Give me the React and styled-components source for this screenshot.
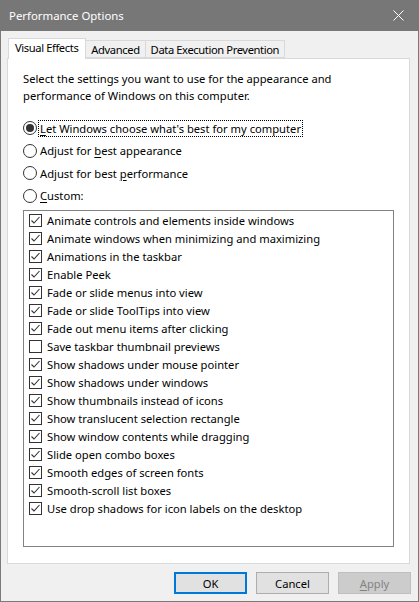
import React from "react";
import styled, { createGlobalStyle } from "styled-components";

const Global = createGlobalStyle`
  html, body { margin: 0; padding: 0; background: #f0f0f0; }
  body { font-family: "Segoe UI", "Noto Sans", "Liberation Sans", sans-serif; font-size: 11.2px; color: #000; }
  * { box-sizing: border-box; }
`;

const Window = styled.div`
  width: 419px;
  height: 602px;
  display: flex;
  flex-direction: column;
  background: #f0f0f0;
  border: 1px solid #7a7a7a;
  border-top: none;
`;

const TitleBar = styled.div`
  height: 31px;
  margin: 0 -1px;
  background: #777777;
  color: #fff;
  display: flex;
  align-items: center;
  justify-content: space-between;
  padding: 0 0 1px 9px;
  font-size: 11.4px;
`;

const CloseBtn = styled.div`
  width: 46px;
  height: 30px;
  display: flex;
  align-items: center;
  justify-content: center;
  padding-left: 5px;
`;

const Body = styled.div`
  flex: 1;
  display: flex;
  flex-direction: column;
  padding: 7px 8px 0 6px;
`;

const TabStrip = styled.div`
  display: flex;
  align-items: flex-end;
  height: 20px;
  padding-left: 1px;
  position: relative;
  z-index: 1;
`;

const Tab = styled.div`
  height: ${(p) => (p.$active ? "21px" : "18px")};
  margin-bottom: ${(p) => (p.$active ? "-1px" : "0")};
  margin-left: ${(p) => (p.$first ? "0" : "-1px")};
  padding: ${(p) => (p.$active ? "0 7px 3px 6px" : "0 5px 0 5px")};
  background: ${(p) => (p.$active ? "#fff" : "#f0f0f0")};
  border: 1px solid #d9d9d9;
  border-bottom: ${(p) => (p.$active ? "none" : "1px solid #d9d9d9")};
  display: flex;
  align-items: center;
  white-space: nowrap;
  letter-spacing: -0.4px;
  position: ${(p) => (p.$active ? "relative" : "static")};
  z-index: ${(p) => (p.$active ? 2 : 0)};
`;

const Panel = styled.div`
  height: 506px;
  background: #fff;
  border: 1px solid #d9d9d9;
  padding: 11px 15px 0 15px;
  display: flex;
  flex-direction: column;
`;

const Description = styled.p`
  margin: 0;
  line-height: 17px;
`;

const RadioGroup = styled.div`
  display: flex;
  flex-direction: column;
  gap: 5.6px;
  margin-top: 15.5px;
`;

const RadioRow = styled.div`
  display: flex;
  align-items: center;
  height: 17px;
`;

const RadioCircle = styled.span`
  width: 14px;
  height: 14px;
  border: 1px solid #333;
  border-radius: 50%;
  display: flex;
  align-items: center;
  justify-content: center;
  margin-right: 2px;
  flex-shrink: 0;
  &::after {
    content: "";
    display: ${(p) => (p.$checked ? "block" : "none")};
    width: 8px;
    height: 8px;
    border-radius: 50%;
    background: #333;
  }
`;

const Label = styled.span`
  white-space: nowrap;
  line-height: 15px;
  outline: ${(p) => (p.$focus ? "1px dotted #000" : "none")};
  outline-offset: 0;
  padding: 0 1px;
`;

const U = styled.span`
  text-decoration: underline;
  text-underline-offset: 2px;
`;

const ListBox = styled.div`
  margin-top: 5.5px;
  height: 337px;
  border: 1px solid #828282;
  padding: 1px 0 0 5px;
  display: flex;
  flex-direction: column;
`;

const CheckRow = styled.div`
  display: flex;
  align-items: center;
  height: 18px;
`;

const CheckBox = styled.span`
  width: 13px;
  height: 13px;
  border: 1px solid #333;
  display: flex;
  align-items: center;
  justify-content: center;
  margin-right: 5px;
  flex-shrink: 0;
  background: #fff;
`;

const ButtonRow = styled.div`
  display: flex;
  justify-content: flex-end;
  gap: 9px;
  padding: 8px 0 0 0;
  margin-right: -1px;
`;

const Button = styled.div`
  width: 73px;
  height: 22px;
  display: flex;
  align-items: center;
  justify-content: center;
  background: ${(p) => (p.$disabled ? "#cccccc" : "#e1e1e1")};
  border: ${(p) => (p.$default ? "2px solid #0078d7" : p.$disabled ? "1px solid #bfbfbf" : "1px solid #adadad")};
  color: ${(p) => (p.$disabled ? "#838383" : "#000")};
`;

const items = [
  ["Animate controls and elements inside windows", true],
  ["Animate windows when minimizing and maximizing", true],
  ["Animations in the taskbar", true],
  ["Enable Peek", true],
  ["Fade or slide menus into view", true],
  ["Fade or slide ToolTips into view", true],
  ["Fade out menu items after clicking", true],
  ["Save taskbar thumbnail previews", false],
  ["Show shadows under mouse pointer", true],
  ["Show shadows under windows", true],
  ["Show thumbnails instead of icons", true],
  ["Show translucent selection rectangle", true],
  ["Show window contents while dragging", true],
  ["Slide open combo boxes", true],
  ["Smooth edges of screen fonts", true],
  ["Smooth-scroll list boxes", true],
  ["Use drop shadows for icon labels on the desktop", true],
];

const Check = () => (
  <svg width="11" height="11" viewBox="0 0 11 11">
    <polyline points="1.5,5.5 4,8 9.5,2" fill="none" stroke="#333" strokeWidth="1.1" />
  </svg>
);

export default function App() {
  return (
    <>
      <Global />
      <Window>
        <TitleBar>
          <span>Performance Options</span>
          <CloseBtn>
            <svg width="11" height="11" viewBox="0 0 11 11">
              <path d="M0.5 0.5 L10.5 10.5 M10.5 0.5 L0.5 10.5" stroke="#fff" strokeWidth="1" />
            </svg>
          </CloseBtn>
        </TitleBar>
        <Body>
          <TabStrip>
            <Tab $active $first>Visual Effects</Tab>
            <Tab>Advanced</Tab>
            <Tab>Data Execution Prevention</Tab>
          </TabStrip>
          <Panel>
            <Description>
              Select the settings you want to use for the appearance and
              <br />
              performance of Windows on this computer.
            </Description>
            <RadioGroup>
              <RadioRow>
                <RadioCircle $checked />
                <Label $focus><U>L</U>et Windows choose what's best for my computer</Label>
              </RadioRow>
              <RadioRow>
                <RadioCircle />
                <Label>Adjust for <U>b</U>est appearance</Label>
              </RadioRow>
              <RadioRow>
                <RadioCircle />
                <Label>Adjust for best <U>p</U>erformance</Label>
              </RadioRow>
              <RadioRow>
                <RadioCircle />
                <Label><U>C</U>ustom:</Label>
              </RadioRow>
            </RadioGroup>
            <ListBox>
              {items.map(([t, c]) => (
                <CheckRow key={t}>
                  <CheckBox>{c && <Check />}</CheckBox>
                  <span>{t}</span>
                </CheckRow>
              ))}
            </ListBox>
          </Panel>
          <ButtonRow>
            <Button $default>OK</Button>
            <Button>Cancel</Button>
            <Button $disabled><U>A</U>pply</Button>
          </ButtonRow>
        </Body>
      </Window>
    </>
  );
}
